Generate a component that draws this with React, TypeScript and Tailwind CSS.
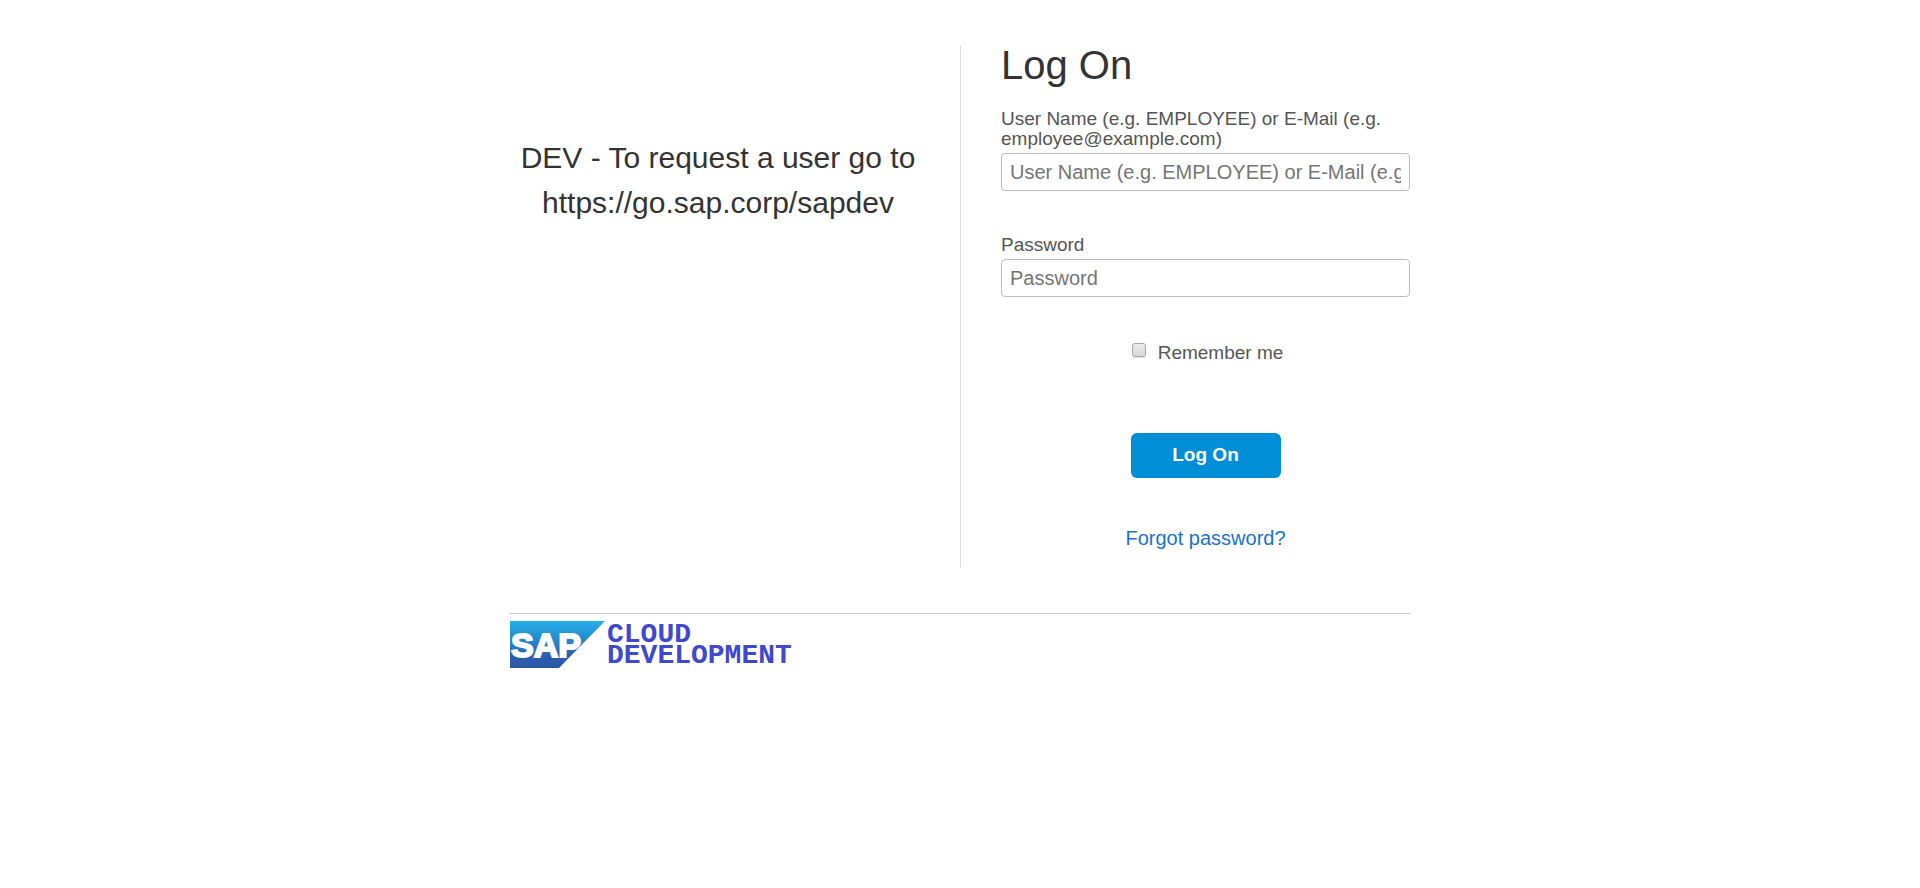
import React from "react";

function SapLogo() {
  return (
    <svg width="95" height="47" viewBox="0 0 95 47" role="img" aria-label="SAP" className="shrink-0">
      <defs>
        <linearGradient id="sap-blue" x1="0" y1="0" x2="0" y2="1">
          <stop offset="0" stopColor="#27b1e7" />
          <stop offset="0.45" stopColor="#2384c8" />
          <stop offset="0.8" stopColor="#2b5cab" />
          <stop offset="1" stopColor="#2b58a7" />
        </linearGradient>
      </defs>
      <path d="M0 0H95L49 47H0Z" fill="url(#sap-blue)" />
      <text
        x="1"
        y="36"
        fill="#fff"
        stroke="#fff"
        strokeWidth="2"
        fontFamily="'Liberation Sans', Arial, sans-serif"
        fontWeight="700"
        fontSize="34"
      >
        SAP
      </text>
    </svg>
  );
}

const labelClass = "block text-[19px] leading-5 text-[#555]";
const fieldClass =
  "mt-1 block h-[38px] w-full rounded-[4px] border border-[#bbb] bg-white px-2 text-[20px] text-[#333] placeholder:text-[#757575]";

export default function App() {
  return (
    <div className="mx-auto max-w-[900px] pt-[45px] font-['Liberation_Sans',Arial,sans-serif] text-[#333]">
      <main className="grid grid-cols-2">
        <section className="pt-[90px] pr-[34px] text-center text-[30px] leading-[45px]">
          <p>
            DEV - To request a user go to
            <br />
            https://go.sap.corp/sapdev
          </p>
        </section>
        <form className="border-l border-[#ddd] pb-[18px] pl-10" onSubmit={(e) => e.preventDefault()}>
          <h1 className="text-[40px] leading-10">Log On</h1>
          <div className="mt-6">
            <label htmlFor="username" className={labelClass}>
              User Name (e.g. EMPLOYEE) or E-Mail (e.g. employee@example.com)
            </label>
            <input
              id="username"
              type="text"
              className={fieldClass}
              placeholder="User Name (e.g. EMPLOYEE) or E-Mail (e.g. employee@example.com)"
            />
          </div>
          <div className="mt-11">
            <label htmlFor="password" className={labelClass}>
              Password
            </label>
            <input id="password" type="password" className={fieldClass} placeholder="Password" />
          </div>
          <div className="mt-[46px] flex items-start justify-center gap-3 pl-1">
            <input
              id="remember"
              type="checkbox"
              className="size-3.5 appearance-none rounded-[3px] border border-[#a6a6a6] bg-linear-to-b from-[#ececec] to-[#d8d8d8] shadow-[0_1px_1px_#ddd] checked:bg-[#008fd3]"
            />
            <label htmlFor="remember" className={labelClass}>
              Remember me
            </label>
          </div>
          <button
            type="submit"
            className="mx-auto mt-[70px] block h-[45px] w-[150px] rounded-[6px] bg-[#008fd6] text-[19px] font-bold text-white"
          >
            Log On
          </button>
          <p className="mt-12 text-center text-[20px] leading-6">
            <a href="#forgot" className="text-[#1873ce]">
              Forgot password?
            </a>
          </p>
        </form>
      </main>
      <footer className="mt-[45px] flex border-t border-[#ccc] pt-[7px]">
        <SapLogo />
        <p className="pt-[3px] pl-0.5 font-['Liberation_Mono',monospace] text-[28px] leading-[21px] font-bold text-[#4048cc]">
          CLOUD
          <br />
          DEVELOPMENT
        </p>
      </footer>
    </div>
  );
}
